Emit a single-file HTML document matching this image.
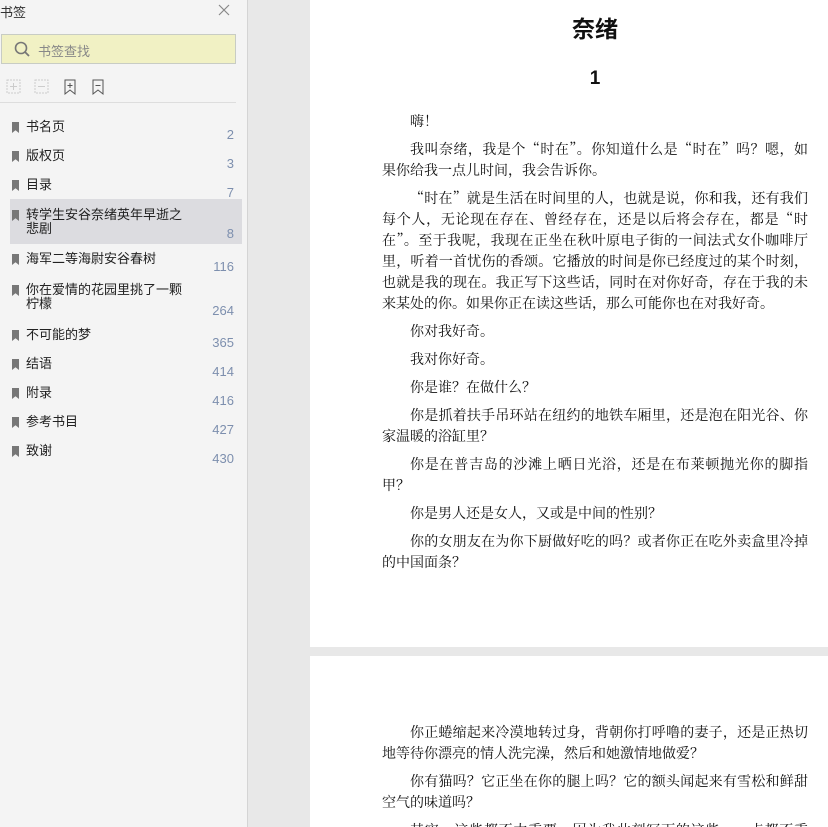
<!DOCTYPE html>
<html><head><meta charset="utf-8"><style>
*{margin:0;padding:0;box-sizing:border-box}
html,body{width:828px;height:827px;overflow:hidden}
body{background:#e8e8e8;position:relative;font-family:"Liberation Sans","Noto Sans CJK SC",sans-serif}
#side{position:absolute;left:0;top:0;width:248px;height:827px;background:#f4f4f4;border-right:1px solid #d4d4d4}
.t{position:absolute;left:0;top:2px;font-size:13px;color:#333}
.search{position:absolute;left:1px;top:34px;width:235px;height:30px;background:#f1f1c4;border:1px solid #c8ccc4}
.search span{position:absolute;left:36px;top:6px;font-size:13px;color:#888}
.tb{position:absolute;top:102px;left:0;width:236px;border-top:1px solid #ddd}
.it{position:absolute;left:10px;width:232px;font-size:13px;color:#222;line-height:14px}
.it .bm{position:absolute;left:2px;top:2px;width:7px;height:11px;background:#777;clip-path:polygon(0 0,100% 0,100% 100%,50% 75%,0 100%)}
.it .n{position:absolute;right:8px;bottom:-8px;color:#7d8fae;font-size:13px}
.it .l{margin-left:16px;display:block}
.page{position:absolute;left:310px;width:518px;background:#fff}
.txt{position:absolute;left:382px;width:426px;font-family:"Noto Serif CJK SC","Liberation Serif",serif;font-size:14px;line-height:21px;color:#111;text-align:justify}
.txt p{text-indent:28px;margin-bottom:7px}
</style></head><body>
<div id="side">
<div class="t">书签</div>
<svg style="position:absolute;left:218px;top:4px" width="12" height="12"><path d="M1 1L11 11M11 1L1 11" stroke="#888" stroke-width="1.2"/></svg>
<div class="search"><svg style="position:absolute;left:12px;top:6px" width="16" height="16"><circle cx="7" cy="7" r="5.5" fill="none" stroke="#777" stroke-width="1.6"/><line x1="11" y1="11" x2="15" y2="15" stroke="#777" stroke-width="1.8"/></svg><span>书签查找</span></div>
<svg style="position:absolute;left:6px;top:78px" width="100" height="18">
<rect x="1" y="2" width="13" height="13" fill="none" stroke="#ccc" stroke-dasharray="2 1"/><path d="M7.5 5v7M4 8.5h7" stroke="#ccc"/>
<rect x="29" y="2" width="13" height="13" fill="none" stroke="#ccc" stroke-dasharray="2 1"/><path d="M32 8.5h7" stroke="#ccc"/>
<path d="M59 2h10v14l-5-4-5 4z" fill="none" stroke="#555"/><path d="M64 5v5M61.5 7.5h5" stroke="#555"/>
<path d="M87 2h10v14l-5-4-5 4z" fill="none" stroke="#555"/><path d="M89.5 7.5h5" stroke="#555"/>
</svg>
<div class="tb"></div>
<div class="it" style="top:120px"><i class="bm"></i><span class="l">书名页</span><span class="n">2</span></div>
<div class="it" style="top:149px"><i class="bm"></i><span class="l">版权页</span><span class="n">3</span></div>
<div class="it" style="top:178px"><i class="bm"></i><span class="l">目录</span><span class="n">7</span></div>
<div style="position:absolute;left:10px;top:199px;width:232px;height:45px;background:#dcdce0"></div>
<div class="it" style="top:208px"><i class="bm"></i><span class="l">转学生安谷奈绪英年早逝之<br>悲剧</span><span class="n" style="bottom:-5px">8</span></div>
<div class="it" style="top:252px"><i class="bm"></i><span class="l">海军二等海尉安谷春树</span><span class="n">116</span></div>
<div class="it" style="top:283px"><i class="bm"></i><span class="l">你在爱情的花园里挑了一颗<br>柠檬</span><span class="n" style="bottom:-7px">264</span></div>
<div class="it" style="top:328px"><i class="bm"></i><span class="l">不可能的梦</span><span class="n">365</span></div>
<div class="it" style="top:357px"><i class="bm"></i><span class="l">结语</span><span class="n">414</span></div>
<div class="it" style="top:386px"><i class="bm"></i><span class="l">附录</span><span class="n">416</span></div>
<div class="it" style="top:415px"><i class="bm"></i><span class="l">参考书目</span><span class="n">427</span></div>
<div class="it" style="top:444px"><i class="bm"></i><span class="l">致谢</span><span class="n">430</span></div>
</div>
<div class="page" style="top:0;height:647px"></div>
<div class="page" style="top:656px;height:171px"></div>
<div style="position:absolute;left:382px;width:426px;top:10px;text-align:center;font-size:23px;font-weight:bold;font-family:'Liberation Sans','Noto Sans CJK SC',sans-serif;color:#111">奈绪</div>
<div style="position:absolute;left:382px;width:426px;top:68px;text-align:center;font-size:19px;font-weight:bold;color:#111">1</div>
<div class="txt" style="top:111px">
<p>嗨！</p>
<p>我叫奈绪，我是个“时在”。你知道什么是“时在”吗？嗯，如果你给我一点儿时间，我会告诉你。</p>
<p>“时在”就是生活在时间里的人，也就是说，你和我，还有我们每个人，无论现在存在、曾经存在，还是以后将会存在，都是“时在”。至于我呢，我现在正坐在秋叶原电子街的一间法式女仆咖啡厅里，听着一首忧伤的香颂。它播放的时间是你已经度过的某个时刻，也就是我的现在。我正写下这些话，同时在对你好奇，存在于我的未来某处的你。如果你正在读这些话，那么可能你也在对我好奇。</p>
<p>你对我好奇。</p>
<p>我对你好奇。</p>
<p>你是谁？在做什么？</p>
<p>你是抓着扶手吊环站在纽约的地铁车厢里，还是泡在阳光谷、你家温暖的浴缸里？</p>
<p>你是在普吉岛的沙滩上晒日光浴，还是在布莱顿抛光你的脚指甲？</p>
<p>你是男人还是女人，又或是中间的性别？</p>
<p>你的女朋友在为你下厨做好吃的吗？或者你正在吃外卖盒里冷掉的中国面条？</p>
</div>
<div class="txt" style="top:722px">
<p>你正蜷缩起来冷漠地转过身，背朝你打呼噜的妻子，还是正热切地等待你漂亮的情人洗完澡，然后和她激情地做爱？</p>
<p>你有猫吗？它正坐在你的腿上吗？它的额头闻起来有雪松和鲜甜空气的味道吗？</p>
<p>其实，这些都不太重要，因为我此刻写下的这些，一点都不重要。</p>
</div>
</body></html>
